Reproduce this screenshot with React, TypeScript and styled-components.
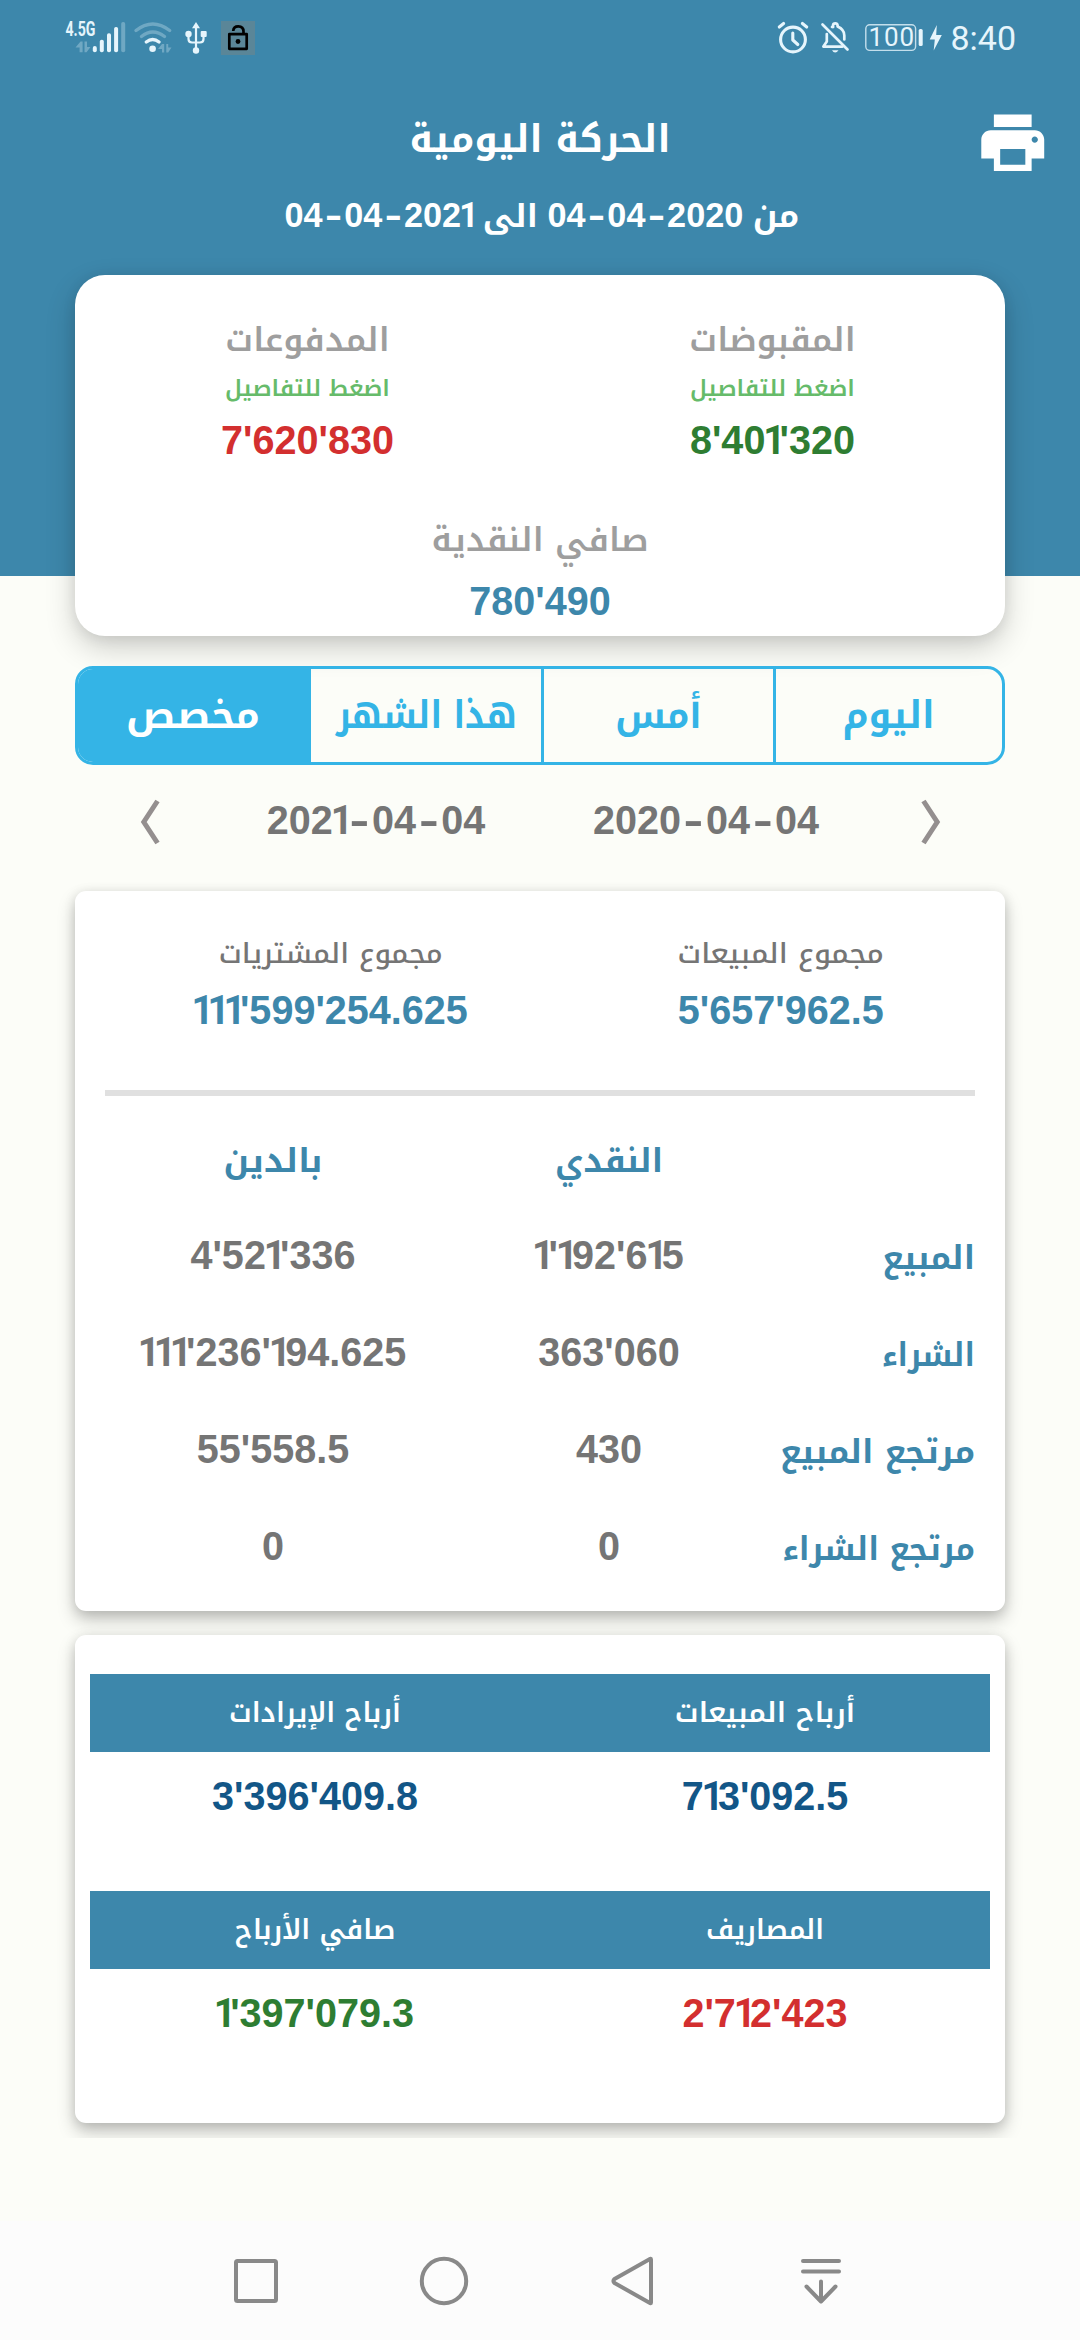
import React from 'react';
import styled, { createGlobalStyle } from 'styled-components';

const colors = {
  brand: '#3d87ab',
  sky: '#34b4e6',
  page: '#fcfdf8',
  grey: '#757575',
  lightGrey: '#9e9e9e',
  green: '#2e7d32',
  mint: '#66bb6a',
  red: '#d32f2f',
  navy: '#125687',
  status: '#e6f5fc',
};

const arabicFont = '"Noto Kufi Arabic", "DejaVu Sans", sans-serif';
const digitFont = '"Liberation Sans", Arial, sans-serif';

const GlobalStyle = createGlobalStyle`
  * { box-sizing: border-box; }
  body { margin: 0; background: ${colors.page}; }
`;

const Screen = styled.div`
  width: 1080px;
  height: 2340px;
  display: flex;
  flex-direction: column;
  background: ${colors.page};
  overflow: hidden;
`;

/* ---------- text ---------- */

const Label = styled.span<{ $size: number; $line: number; $color: string; $weight?: number; $fit?: number; $align?: string }>`
  display: block;
  margin: 0;
  font-family: ${arabicFont};
  font-size: ${p => p.$size}px;
  line-height: ${p => p.$line}px;
  font-weight: ${p => p.$weight ?? 600};
  color: ${p => p.$color};
  direction: rtl;
  white-space: nowrap;
  text-align: ${p => p.$align ?? 'center'};
  transform: scaleX(${p => p.$fit ?? 1});
  transform-origin: ${p => p.$align ?? 'center'} center;
`;

const Digits = styled.span<{ $size: number; $line: number; $color: string }>`
  display: block;
  font-family: ${digitFont};
  font-size: ${p => p.$size}px;
  line-height: ${p => p.$line}px;
  font-weight: 700;
  font-kerning: none;
  color: ${p => p.$color};
  direction: ltr;
  white-space: nowrap;
  text-align: center;
  transform: scaleX(0.965);
`;

const One = styled.span`
  font-family: Roboto, sans-serif;
  font-size: 0.98em;
  line-height: 1;
  letter-spacing: -0.16em;
  margin-left: -0.055em;
  margin-right: 0.008em;
`;

const Dash = styled.span`
  display: inline-block;
  line-height: 1;
  margin: 0 0.15em;
  transform: scaleX(1.5);
`;

interface NumberTextProps {
  text: string;
  color: string;
  size?: number;
  line: number;
}

function NumberText({ text, color, size = 41, line }: NumberTextProps) {
  return (
    <Digits $size={size} $line={line} $color={color}>
      {text.split(/(1+|-)/).map((part, i) => {
        if (part.startsWith('1')) return <One key={i}>{part}</One>;
        if (part === '-') return <Dash key={i}>-</Dash>;
        return part;
      })}
    </Digits>
  );
}

/* ---------- status bar ---------- */

const StatusBar = styled.div`
  height: 76px;
  padding: 21px 64px 0;
  display: flex;
  justify-content: space-between;
`;

const StatusGroup = styled.div`
  display: flex;
  height: 34px;
`;

const StatusIcon = styled.svg<{ $gap?: number }>`
  display: block;
  height: 34px;
  margin-left: ${p => p.$gap ?? 0}px;
  overflow: visible;
`;

const Clock = styled.span`
  margin-left: 7px;
  font: 400 34px/34px Roboto, sans-serif;
  color: ${colors.status};
`;

function StatusIcons() {
  const c = colors.status;
  return (
    <StatusBar>
      <StatusGroup>
        <StatusIcon width="64" viewBox="64 21 64 34" fill={c}>
          <text x="65.5" y="35.8" fontFamily="Roboto, sans-serif" fontSize="19.5" fontWeight="700" textLength="30" lengthAdjust="spacingAndGlyphs">4.5G</text>
          <g opacity="0.3">
            <path d="M75.500 47.500 80.500 41.500H82.600V52.300H79.600V47.500Z" />
            <path d="M84.500 41.500H87V47H90.500L86.500 52.300H84.500Z" />
          </g>
          <rect x="92.800" y="46" width="4" height="6.300" rx="2" />
          <rect x="99.800" y="39.700" width="4" height="12.600" rx="1.800" />
          <rect x="107" y="33.300" width="4" height="19" rx="1.800" />
          <rect x="114.100" y="27" width="4" height="25.300" rx="1.800" />
          <rect x="121.200" y="22" width="4" height="30.300" rx="1.800" opacity="0.3" />
        </StatusIcon>
        <StatusIcon $gap={4} width="42" viewBox="132 21 42 34" fill="none" stroke={c} strokeWidth="3.400" strokeLinecap="round">
          <path d="M136 30.500Q152.700 17.500 169.700 30.500" opacity="0.3" />
          <path d="M141.500 36.500Q152.700 27.500 164.500 36.500" opacity="0.3" />
          <path d="M146.300 42Q152.700 37 159 42" />
          <circle cx="152.600" cy="48.800" r="3.300" fill={c} stroke="none" />
          <g fill={c} stroke="none" opacity="0.3">
            <path d="M158 49 162 44H164.200V52.500H162V49Z" />
            <path d="M166.300 44H168.200V47.500H171.500L168.200 52.500H166.300Z" />
          </g>
        </StatusIcon>
        <StatusIcon $gap={10} width="24" viewBox="184 21 24 34" fill={c}>
          <g fill="none" stroke={c} strokeWidth="2.200" strokeLinejoin="round">
            <path d="M196 27V50" />
            <path d="M188.500 34V39Q188.500 42.500 192 42.500H200Q203.500 42.500 203.500 39V34" />
          </g>
          <path d="M196 22 200 28.300H192Z" />
          <circle cx="188.500" cy="34" r="3.200" />
          <rect x="200.700" y="31" width="6" height="6" rx="1" />
          <circle cx="196" cy="50.500" r="3.200" />
        </StatusIcon>
        <StatusIcon $gap={13} width="34" viewBox="221 21 34 34">
          <rect x="221" y="21" width="34" height="34" fill="#5a8698" />
          <g fill="none" stroke="#000" strokeWidth="2.700" strokeLinejoin="round">
            <rect x="229.300" y="34.200" width="17.400" height="14.600" />
            <path d="M233.200 31Q233.500 26.300 238.300 26.300Q243.500 26.300 243.500 31.500V34" />
          </g>
          <circle cx="238" cy="41.500" r="2.400" />
        </StatusIcon>
      </StatusGroup>
      <StatusGroup>
        <StatusIcon width="34" viewBox="776 21 34 34" fill="none" stroke={c} strokeWidth="3.100" strokeLinecap="round" strokeLinejoin="round">
          <circle cx="793" cy="39.500" r="12.400" />
          <path d="M792.800 33V40L797.800 44.500" />
          <path d="M779.300 27 783.600 23.500" />
          <path d="M802.400 23.500 806.700 27" />
        </StatusIcon>
        <StatusIcon $gap={10} width="30" viewBox="820 21 30 34" fill="none" stroke={c} strokeWidth="2.700" strokeLinecap="round" strokeLinejoin="round">
          <path d="M822.500 24.500 847.500 49.500" />
          <path d="M826.800 34V41.500L823.400 46.600H842.500" />
          <path d="M833 27V25.300Q833.200 23.300 835.300 23.300Q837.300 23.300 837.600 25.300V26.600Q844.300 29.500 844.300 35.500V39.500" />
          <path d="M832 27 833 27" />
          <path d="M832 50.300H838.500Q837 52.600 835.200 52.600Q833.300 52.600 832 50.300Z" fill={c} stroke="none" />
        </StatusIcon>
        <StatusIcon $gap={14} width="60" viewBox="864 21 60 34" fill={c}>
          <rect x="865.800" y="24.800" width="49.800" height="25.600" rx="4" fill="none" stroke={c} strokeWidth="1.400" opacity="0.8" />
          <text x="868.500" y="46" fontFamily="Roboto, sans-serif" fontSize="26" textLength="45.500" lengthAdjust="spacing">100</text>
          <rect x="918.700" y="29" width="4" height="17" rx="1.600" />
        </StatusIcon>
        <StatusIcon $gap={5} width="14" viewBox="929 21 14 34" fill={c}>
          <path d="M936.800 25 929.700 39.500H934.800L933.700 50.500 941.800 35H936.200Z" />
        </StatusIcon>
        <Clock>8:40</Clock>
      </StatusGroup>
    </StatusBar>
  );
}

/* ---------- header ---------- */

const Header = styled.header`
  height: 576px;
  flex: none;
  background: ${colors.brand};
`;

const TitleBar = styled.div`
  display: grid;
  grid-template-columns: 1fr auto 1fr;
  padding: 29px 29.5px 0;
  height: 112px;
`;

const PrintButton = styled.button`
  grid-column: 3;
  justify-self: end;
  width: 75.500px;
  height: 75.500px;
  padding: 0;
  border: 0;
  background: none;
  color: #fff;
  svg { display: block; width: 100%; height: 100%; }
`;

const TitleSlot = styled.div`
  grid-column: 2;
  grid-row: 1;
  padding-top: 5px;
`;

const RangeLine = styled.div`
  display: flex;
  justify-content: center;
  align-items: baseline;
  gap: 6px;
  direction: rtl;
  margin-top: 2px;
`;

/* ---------- cash summary ---------- */

const SummaryCard = styled.section`
  flex: none;
  margin: -301px 75px 0;
  height: 361px;
  padding-top: 37px;
  border-radius: 30px;
  background: #fff;
  box-shadow: 0 12px 30px rgba(0, 0, 0, 0.19), 0 2px 14px rgba(0, 0, 0, 0.08);
  position: relative;
`;

const Halves = styled.div<{ $inset?: number }>`
  display: grid;
  grid-template-columns: 1fr 1fr;
  padding-left: ${p => p.$inset ?? 0}px;
`;

const NetCash = styled.div`
  margin-top: 34px;
`;

/* ---------- period tabs ---------- */

const Tabs = styled.nav`
  flex: none;
  display: grid;
  grid-template-columns: 233px 233px 232px 1fr;
  margin: 30px 75px 0;
  height: 99px;
  border: 3px solid ${colors.sky};
  border-radius: 18px;
  overflow: hidden;
  position: relative;
`;

const Tab = styled.div<{ $active?: boolean }>`
  display: flex;
  align-items: center;
  justify-content: center;
  background: ${p => (p.$active ? colors.sky : 'transparent')};
  border-right: 3px solid ${colors.sky};
  &:last-child { border-right: 0; }
`;

const DateRow = styled.div`
  flex: none;
  display: grid;
  grid-template-columns: 149px 304px 356px 94px;
  align-items: center;
  margin: 0 75px;
  height: 110px;
`;

const Chevron = styled.svg`
  display: block;
  margin: 4px auto 0;
  fill: none;
  stroke: #948f8f;
  stroke-width: 5px;
`;

/* ---------- report cards ---------- */

const Reports = styled.main`
  flex: none;
  height: 1263px;
  padding: 16px 75px 0;
  overflow: hidden;
`;

const Card = styled.section<{ $height: number; $top: number }>`
  height: ${p => p.$height}px;
  padding-top: ${p => p.$top}px;
  margin-bottom: 24px;
  border-radius: 11px;
  background: #fff;
  box-shadow: 0 9px 18px rgba(0, 0, 0, 0.22), 0 2px 12px rgba(0, 0, 0, 0.12);
`;

const Divider = styled.hr`
  height: 6px;
  margin: 49px 30px 35px;
  border: 0;
  background: #e0e0e0;
`;

const TableRow = styled.div<{ $height: number }>`
  display: grid;
  grid-template-columns: 336px 336px minmax(0, 1fr);
  align-items: baseline;
  height: ${p => p.$height}px;
  margin: 0 30px;
`;

const ProfitBlock = styled.div`
  margin: 0 15px;
  height: 217px;
`;

const ProfitHeader = styled.div`
  display: grid;
  grid-template-columns: 1fr 1fr;
  background: ${colors.brand};
`;

/* ---------- navigation bar ---------- */

const NavBar = styled.footer`
  margin-top: auto;
  height: 119px;
  flex: none;
  background: #fcfcfc;
  display: flex;
  justify-content: center;
  padding: 30px 3px 0 0;
`;

const NavItem = styled.div`
  width: 188.300px;
  svg {
    display: block;
    width: 60px;
    height: 60px;
    margin: 0 auto;
    fill: none;
    stroke: #898989;
    stroke-width: 4px;
    stroke-linecap: round;
    stroke-linejoin: round;
  }
`;

const cash = [
  { label: 'المدفوعات', amount: "7'620'830", color: colors.red },
  { label: 'المقبوضات', amount: "8'401'320", color: colors.green },
];

const tabs = [
  { label: 'مخصص', fit: 1.03, active: true },
  { label: 'هذا الشهر', fit: 0.89 },
  { label: 'أمس', fit: 0.95 },
  { label: 'اليوم', fit: 0.97 },
];

const totals = [
  { label: 'مجموع المشتريات', amount: "111'599'254.625", fit: 1.02 },
  { label: 'مجموع المبيعات', amount: "5'657'962.5", fit: 1.045 },
];

const rows = [
  { label: 'المبيع', cash: "1'192'615", debt: "4'521'336", fit: 1 },
  { label: 'الشراء', cash: "363'060", debt: "111'236'194.625", fit: 0.92 },
  { label: 'مرتجع المبيع', cash: '430', debt: "55'558.5", fit: 1.01 },
  { label: 'مرتجع الشراء', cash: '0', debt: '0', fit: 0.955 },
];

const profits = [
  [
    { label: 'أرباح الإيرادات', amount: "3'396'409.8", color: colors.navy, fit: 0.985 },
    { label: 'أرباح المبيعات', amount: "713'092.5", color: colors.navy, fit: 1.035 },
  ],
  [
    { label: 'صافي الأرباح', amount: "1'397'079.3", color: colors.green, fit: 0.985 },
    { label: 'المصاريف', amount: "2'712'423", color: colors.red, fit: 0.97 },
  ],
];

export default function App() {
  return (
    <Screen>
      <GlobalStyle />
      <Header>
        <StatusIcons />
        <TitleBar>
          <TitleSlot>
            <Label as="h1" $size={37.5} $line={60} $weight={700} $color="#fff">
              الحركة اليومية
            </Label>
          </TitleSlot>
          <PrintButton aria-label="طباعة">
            <svg viewBox="0 0 24 24" fill="currentColor">
              <path d="M19 8H5c-1.660 0-3 1.340-3 3v6h4v4h12v-4h4v-6c0-1.660-1.340-3-3-3zm-3 11H8v-5h8v5zm3-7c-.550 0-1-.450-1-1s.450-1 1-1 1 .450 1 1-.450 1-1 1zm-1-9H6v4h12V3z" />
            </svg>
          </PrintButton>
        </TitleBar>
        <RangeLine>
          <Label $size={32.5} $line={50} $weight={700} $color="#fff">من</Label>
          <NumberText text="04-04-2020" size={35.5} line={50} color="#fff" />
          <Label $size={32} $line={50} $weight={700} $color="#fff">الى</Label>
          <NumberText text="04-04-2021" size={35.5} line={50} color="#fff" />
        </RangeLine>
      </Header>

      <SummaryCard>
        <Halves>
          {cash.map(item => (
            <div key={item.label}>
              <Label $size={33} $line={56} $color={colors.lightGrey} $fit={1.01}>{item.label}</Label>
              <Label $size={23} $line={41} $color={colors.mint}>اضغط للتفاصيل</Label>
              <NumberText text={item.amount} line={62} color={item.color} />
            </div>
          ))}
        </Halves>
        <NetCash>
          <Label $size={33} $line={70} $color={colors.lightGrey} $fit={1.01}>صافي النقدية</Label>
          <NumberText text="780'490" line={52} color={colors.brand} />
        </NetCash>
      </SummaryCard>

      <Tabs>
        {tabs.map(tab => (
          <Tab key={tab.label} $active={tab.active}>
            <Label $size={37.5} $line={60} $weight={700} $color={tab.active ? '#fff' : colors.sky} $fit={tab.fit}>
              {tab.label}
            </Label>
          </Tab>
        ))}
      </Tabs>

      <DateRow>
        <Chevron width="22" height="46" viewBox="0 0 22 46">
          <path d="M18.500 2 4.800 23 18.500 44" />
        </Chevron>
        <NumberText text="2021-04-04" line={60} color={colors.grey} />
        <NumberText text="2020-04-04" line={60} color={colors.grey} />
        <Chevron width="22" height="46" viewBox="0 0 22 46">
          <path d="M3.500 2 17.200 23 3.500 44" />
        </Chevron>
      </DateRow>

      <Reports>
        <Card $height={720} $top={38}>
          <Halves $inset={31}>
            {totals.map(item => (
              <div key={item.label}>
                <Label $size={28} $line={50} $weight={500} $color={colors.grey} $fit={item.fit}>{item.label}</Label>
                <NumberText text={item.amount} line={62} color={colors.brand} />
              </div>
            ))}
          </Halves>
          <Divider />
          <TableRow $height={93.5}>
            <Label $size={32.5} $line={60} $weight={700} $color={colors.brand} $fit={1.03}>بالدين</Label>
            <Label $size={32.5} $line={60} $weight={700} $color={colors.brand}>النقدي</Label>
          </TableRow>
          {rows.map(row => (
            <TableRow key={row.label} $height={97}>
              <NumberText text={row.debt} line={60} color={colors.grey} />
              <NumberText text={row.cash} line={60} color={colors.grey} />
              <Label $size={32.5} $line={50} $weight={700} $color={colors.brand} $fit={row.fit} $align="right">
                {row.label}
              </Label>
            </TableRow>
          ))}
        </Card>

        <Card $height={488} $top={39}>
          {profits.map(pair => (
            <ProfitBlock key={pair[0].label}>
              <ProfitHeader>
                {pair.map(item => (
                  <Label key={item.label} $size={27.5} $line={78} $color="#fff" $fit={item.fit}>{item.label}</Label>
                ))}
              </ProfitHeader>
              <Halves>
                {pair.map(item => (
                  <NumberText key={item.label} text={item.amount} line={88} color={item.color} />
                ))}
              </Halves>
            </ProfitBlock>
          ))}
        </Card>
      </Reports>

      <NavBar>
        <NavItem>
          <svg viewBox="0 0 60 60"><rect x="10" y="10" width="40" height="40" rx="1.500" /></svg>
        </NavItem>
        <NavItem>
          <svg viewBox="0 0 60 60"><circle cx="30" cy="30" r="22.200" /></svg>
        </NavItem>
        <NavItem>
          <svg viewBox="0 0 60 60"><path d="M48 8.500V51.500Q48 53 46.500 51.700L11.500 32Q9.500 30 11.500 28L46.500 8.300Q48 7 48 8.500Z" /></svg>
        </NavItem>
        <NavItem>
          <svg viewBox="0 0 60 60"><path d="M12 10H48M12 20.500H48M30 30.500V50M15.500 35.500 30 50.500 44.500 35.500" /></svg>
        </NavItem>
      </NavBar>
    </Screen>
  );
}
